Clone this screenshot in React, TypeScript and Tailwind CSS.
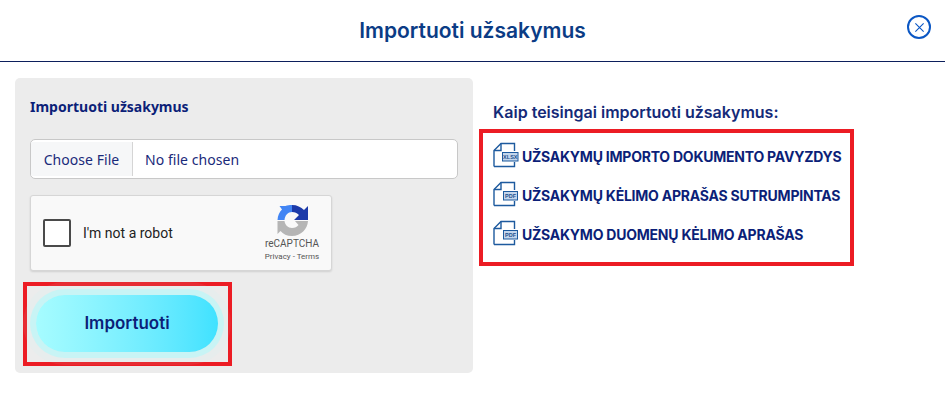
const Doc = ({ label }: { label: string }) => (
  <svg width="26" height="26" viewBox="0 0 26 26" className="mt-[-3px] shrink-0" fill="none">
    <path d="M1 24.5V8.5L8 1.5H21.5V9" stroke="#1d5a9e" strokeWidth="1.4" />
    <path d="M1 8.5H8V1.5" stroke="#1d5a9e" strokeWidth="1.4" />
    <path d="M1 24.5H21.5V20" stroke="#1d5a9e" strokeWidth="1.4" />
    <rect x={label === "XLSX" ? 9 : 10} y="10" width={label === "XLSX" ? 16.5 : 15} height="9.5" fill="#1d5a9e" />
    <rect x={label === "XLSX" ? 10 : 11} y="11" width={label === "XLSX" ? 14.5 : 13} height="7.5" fill="#c3d6ec" />
    <text x={label === "XLSX" ? 17.3 : 17.5} y="17" textAnchor="middle" fontSize="5.5" fontWeight="700" fill="#1d4f8c" fontFamily="Liberation Sans, sans-serif">{label}</text>
  </svg>
);

const Row = ({ label, text }: { label: string; text: string }) => (
  <div className="flex h-[26px] items-center gap-[3px]">
    <Doc label={label} />
    <span className="text-[14px] font-bold leading-none tracking-[-0.23px] text-[#0c1f78] whitespace-nowrap">{text}</span>
  </div>
);

export default function App() {
  return (
    <div className="h-[403px] w-[945px] overflow-hidden bg-white font-['Inter',sans-serif]">
      <header className="relative flex h-[62px] items-center justify-center border-b border-[#0c1f5c]">
        <h1 className="text-[21px] font-semibold text-[#0b3c85]">Importuoti užsakymus</h1>
        <button className="absolute right-[14px] top-[15px] flex h-[24px] w-[24px] items-center justify-center rounded-full border-2 border-[#0b57c4]">
          <svg width="11" height="11" viewBox="0 0 12 12" fill="none">
            <path d="M1.5 1.5L10.5 10.5M10.5 1.5L1.5 10.5" stroke="#0b57c4" strokeWidth="1.2" />
          </svg>
        </button>
      </header>

      <main className="flex pl-[15px] pt-[16px]">
        <section className="h-[295px] w-[458px] rounded-[5px] bg-[#ececec] px-[15px] pt-[19px]">
          <h2 className="font-['Noto_Sans',sans-serif] text-[14px] font-bold leading-[20px] text-[#0c1f78]">Importuoti užsakymus</h2>

          <div className="mt-[22px] flex h-[40px] items-stretch overflow-hidden rounded-[5px] border border-[#c8c8c8] bg-white font-['Noto_Sans',sans-serif] text-[14px] tracking-[0.05px] text-[#1a2a7a]">
            <div className="my-[2px] flex w-[102px] items-center justify-center border-r border-[#d5d5d5] bg-[#f6f7f8]">Choose File</div>
            <div className="flex items-center pl-[12px]">No file chosen</div>
          </div>

          <div className="mt-[16px] flex h-[76px] w-[302px] items-center rounded-[3px] border border-[#d6d6d6] bg-[#f9f9f9] pl-[12px] pr-[10px] font-['Roboto',sans-serif] shadow-[0_1px_2px_rgba(0,0,0,0.12)]">
            <div className="h-[28px] w-[28px] rounded-[2px] border-2 border-[#4a4a4a] bg-white" />
            <span className="ml-[12px] text-[14px] text-[#222]">I'm not a robot</span>
            <div className="ml-auto flex w-[58px] flex-col items-center">
              <svg width="31" height="31" viewBox="0 0 31 31">
                <path d="M15 0C20 0 24 2 27 5L31 1V15H17L22 10C20 8 18 7 15 7Z" fill="#1c3aa9" />
                <path d="M15 0V7C11 7 8 10 7.5 15H0.5C0.7 10.5 2.5 7 5 4.5L2.5 1H8.5C10.5 0.3 12.5 0 15 0Z" fill="#4285f4" />
                <path d="M0.5 16H7.5C8 20 11 23 15 23C18 23 20 22 21.5 20L18 16H31C30.5 24 24 31 15 31C10 31 6 29 3.5 26L0.5 29Z" fill="#b5b5b5" />
              </svg>
              <span className="mt-[1px] text-[10px] leading-[13px] text-[#555]">reCAPTCHA</span>
              <span className="mt-[1px] whitespace-nowrap text-[8px] leading-[11px] text-[#555]">Privacy - Terms</span>
            </div>
          </div>

          <div className="ml-[-7px] mt-[11px] flex h-[84px] w-[209px] items-start border-4 border-[#ec1c24] pl-[9px] pt-[9px]">
            <button className="flex h-[57px] w-[182px] items-center justify-center rounded-full bg-gradient-to-r from-[#a6fcff] to-[#3fe2ff] text-[17px] font-semibold text-[#0c1f78] shadow-[0_0_0_6px_rgba(175,250,252,0.55),0_0_0_13px_rgba(175,250,252,0.07)]">
              Importuoti
            </button>
          </div>
        </section>

        <section className="ml-[6px] pt-[24px]">
          <h3 className="pl-[14px] text-[16px] font-semibold leading-[20px] text-[#142a78]">Kaip teisingai importuoti užsakymus:</h3>
          <div className="mt-[7px] flex h-[137px] w-[375px] flex-col justify-center gap-[13px] border-4 border-[#ec1c24] bg-white pb-[4px] pl-[10px]">
            <Row label="XLSX" text="UŽSAKYMŲ IMPORTO DOKUMENTO PAVYZDYS" />
            <Row label="PDF" text="UŽSAKYMŲ KĖLIMO APRAŠAS SUTRUMPINTAS" />
            <Row label="PDF" text="UŽSAKYMO DUOMENŲ KĖLIMO APRAŠAS" />
          </div>
        </section>
      </main>
    </div>
  );
}
